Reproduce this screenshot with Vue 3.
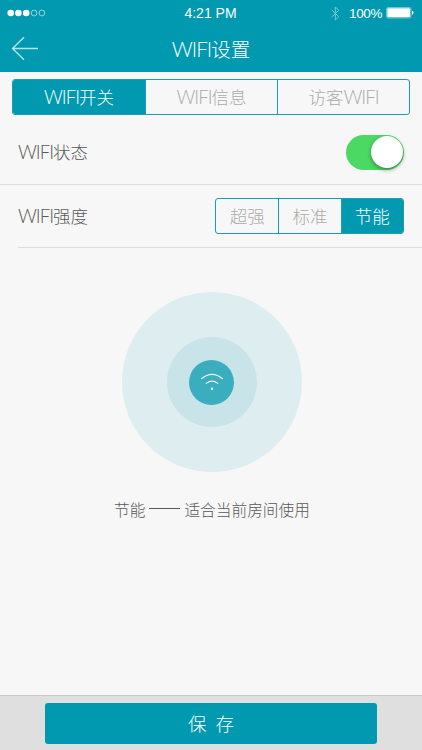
<script setup>
import { ref } from 'vue'

const tabs = [
  { pre: 'WIFI', zh: '开关', post: '' },
  { pre: 'WIFI', zh: '信息', post: '' },
  { pre: '', zh: '访客', post: 'WIFI' },
]
const activeTab = ref(0)
const levels = ['超强', '标准', '节能']
const activeLevel = ref(2)
const enabled = ref(true)
</script>

<template>
  <div class="screen">
    <header class="header">
      <div class="status">
        <svg class="signal" width="40" height="10" viewBox="0 0 40 10">
          <circle cx="3.7" cy="5" r="3.3" fill="#fff" />
          <circle cx="11.4" cy="5" r="3.3" fill="#fff" />
          <circle cx="19.2" cy="5" r="3.3" fill="#fff" />
          <circle cx="27.1" cy="5" r="2.9" fill="none" stroke="#b5e2e8" stroke-width=".8" />
          <circle cx="34.9" cy="5" r="2.9" fill="none" stroke="#b5e2e8" stroke-width=".8" />
        </svg>
        <span class="time">4:21 PM</span>
        <div class="power">
          <svg width="9" height="15" viewBox="0 0 9 15" fill="none" stroke="#79c9d4" stroke-width="1">
            <path d="M.7 4 L7.8 10.7 L4.3 14 V1 L7.8 4.3 L.7 11" />
          </svg>
          <span class="percent">100%</span>
          <svg width="28" height="12" viewBox="0 0 28 12">
            <rect x=".5" y=".5" width="24.5" height="10.5" rx="1.6" fill="none" stroke="#8ed2db" stroke-width=".8" />
            <rect x="1.3" y="1.3" width="22.9" height="8.9" rx="1" fill="#fff" />
            <path d="M26 3.7 Q27.6 4.2 27.6 5.8 Q27.6 7.3 26 7.8Z" fill="#fff" />
          </svg>
        </div>
      </div>
      <div class="nav">
        <svg class="back" width="28" height="26" viewBox="0 0 28 26" fill="none" stroke="#b4e5ea" stroke-width="1.4">
          <path d="M13 1.2 L1.5 12.5 L13 23.8 M1.5 12.5 H27" />
        </svg>
        <h1 class="title"><span class="latin">WIFI</span>设置</h1>
      </div>
    </header>

    <nav class="segments tabs">
      <button v-for="(t, i) in tabs" :key="i" :class="{ active: i === activeTab }" @click="activeTab = i">
        <span v-if="t.pre" class="latin">{{ t.pre }}</span>{{ t.zh }}<span v-if="t.post" class="latin">{{ t.post }}</span>
      </button>
    </nav>

    <section class="row state">
      <span class="label"><span class="latin">WIFI</span>状态</span>
      <button class="switch" :class="{ on: enabled }" @click="enabled = !enabled"><span class="knob"></span></button>
    </section>
    <section class="row strength">
      <span class="label"><span class="latin">WIFI</span>强度</span>
      <div class="segments levels">
        <button v-for="(l, i) in levels" :key="l" :class="{ active: i === activeLevel }" @click="activeLevel = i">{{ l }}</button>
      </div>
    </section>

    <main class="content">
      <div class="ring outer">
        <div class="ring middle">
          <div class="ring core">
            <svg width="24" height="18" viewBox="0 0 24 18" fill="none" stroke="#e6f8fa" stroke-width="1.2" stroke-linecap="round">
              <path d="M1.5 5.7 Q12 -3.1 22.5 5.7" />
              <path d="M6.2 10.4 Q12 5.8 17.8 10.4" />
              <circle cx="12" cy="15.8" r="1.2" fill="#fff" stroke="none" />
            </svg>
          </div>
        </div>
      </div>
      <p class="hint"><span>节能</span><i class="dash"></i><span>适合当前房间使用</span></p>
    </main>

    <footer class="footer">
      <button class="save"><span>保</span><span>存</span></button>
    </footer>
  </div>
</template>

<style>
body {
  margin: 0;
  background: #f7f7f7;
}
</style>

<style scoped>
.screen {
  width: 422px;
  height: 750px;
  display: flex;
  flex-direction: column;
  overflow: hidden;
  background: #f7f7f7;
  color: #585858;
  font-family: "Noto Sans CJK SC", sans-serif;
  font-weight: 300;
}
button {
  margin: 0;
  padding: 0;
  border: 0;
  background: none;
  font: inherit;
  color: inherit;
}
.latin {
  font-family: Lato, "Liberation Sans", sans-serif;
  font-size: 1.06em;
  font-weight: 300;
  line-height: 1;
  letter-spacing: -1px;
}
.header {
  height: 72px;
  flex: none;
  background: #0099af;
  color: #fff;
}
.status {
  height: 26px;
  display: grid;
  grid-template-columns: 1fr auto 1fr;
  align-items: center;
  padding: 0 8px 0 7px;
  font: 400 14px/26px "Liberation Sans", Arial, sans-serif;
}
.power {
  display: flex;
  align-items: center;
  justify-content: flex-end;
}
.percent {
  margin: 1px 4px 0 9px;
  font-size: 13.5px;
  line-height: 25px;
  letter-spacing: -.4px;
}
.nav {
  height: 46px;
  display: grid;
  grid-template-columns: 28px 1fr 28px;
  align-items: center;
  padding: 0 11px;
}
.title {
  margin: 0;
  font-size: 19.5px;
  line-height: 46px;
  font-weight: 300;
  text-align: center;
}
.segments {
  display: grid;
  grid-template-columns: repeat(3, 1fr);
  box-sizing: border-box;
  height: 36px;
  border: 1px solid #1a9fb3;
  border-radius: 3px;
  overflow: hidden;
  color: #ababab;
  font-size: 17.5px;
  line-height: 33px;
}
.segments button {
  padding-bottom: 1px;
}
.segments button + button {
  border-left: 1px solid #1a9fb3;
}
.segments .active {
  background: #0099af;
  color: #fff;
}
.tabs {
  flex: none;
  margin: 7px 12px 0;
}
.row {
  flex: none;
  display: flex;
  align-items: center;
  justify-content: space-between;
  box-sizing: border-box;
  border-bottom: 1px solid #dedede;
}
.state {
  height: 70px;
  padding: 5px 18px 0;
}
.strength {
  height: 63px;
  margin-left: 18px;
  padding-right: 18px;
}
.label {
  padding-bottom: 2px;
  font-size: 17.5px;
}
.switch {
  width: 58px;
  height: 35px;
  box-sizing: border-box;
  padding: 1px;
  display: flex;
  border-radius: 18px;
  background: #ddd;
}
.switch.on {
  justify-content: flex-end;
  background: #4bd964;
}
.knob {
  width: 32px;
  height: 32px;
  border-radius: 50%;
  background: #fff;
  box-shadow: 0 2px 4px rgba(0, 0, 0, .35);
}
.levels {
  width: 189px;
}
.content {
  flex: 1;
  display: flex;
  flex-direction: column;
  align-items: center;
  padding: 44px 0 0 1px;
}
.ring {
  display: flex;
  align-items: center;
  justify-content: center;
  border-radius: 50%;
}
.outer {
  width: 180px;
  height: 180px;
  background: #deedef;
}
.middle {
  width: 90px;
  height: 90px;
  background: #c8e4e8;
}
.core {
  width: 45px;
  height: 45px;
  background: #3aadbf;
}
.hint {
  display: flex;
  align-items: center;
  margin: 25px 0 0 1px;
  font-size: 15.7px;
  line-height: 25px;
}
.dash {
  width: 31px;
  height: 1px;
  margin: 0 4px 2px;
  background: #585858;
}
.footer {
  flex: none;
  box-sizing: border-box;
  height: 55px;
  padding: 7px 45px 0;
  border-top: 1px solid #c9c9c9;
  background: #dfdfdf;
}
.save {
  width: 332px;
  height: 41px;
  box-sizing: border-box;
  padding-bottom: 2px;
  display: flex;
  align-items: center;
  justify-content: center;
  gap: 9px;
  border-radius: 3px;
  background: #0099af;
  color: #fff;
  font-size: 18.5px;
}
</style>
